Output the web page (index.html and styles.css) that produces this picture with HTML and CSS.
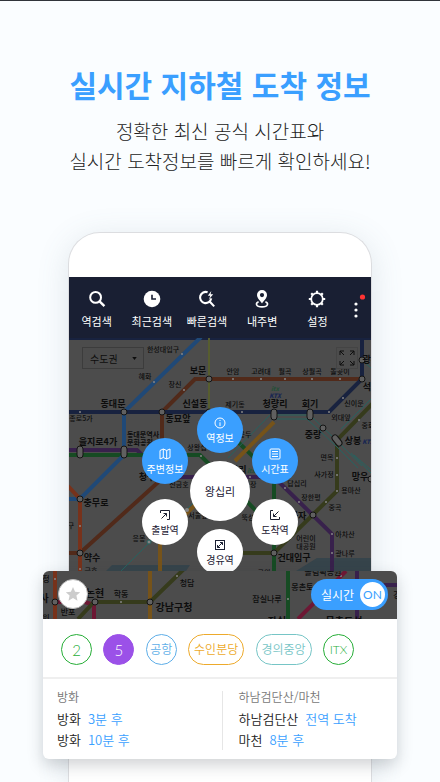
FILE: index.html
```
<!DOCTYPE html>
<html lang="ko">
<head>
<meta charset="utf-8">
<meta name="viewport" content="width=device-width, initial-scale=1">
<title>실시간 지하철 도착 정보</title>
<link rel="stylesheet" href="styles.css">
</head>
<body>
<header class="intro">
  <h1>실시간 지하철 도착 정보</h1>
  <p>정확한 최신 공식 시간표와<br>실시간 도착정보를 빠르게 확인하세요!</p>
</header>

<main class="phone">
  <nav class="toolbar">
    <button class="tool" type="button">
      <svg viewBox="0 0 18 18"><circle cx="7.6" cy="7.4" r="5.4"/><path d="M11.6 11.4 16.4 16.2" stroke-width="2.4"/></svg>
      <span>역검색</span>
    </button>
    <button class="tool" type="button">
      <svg viewBox="0 0 18 18"><circle cx="9" cy="9" r="8.3" fill="#fff" stroke="none"/><path d="M9 4.8V9h4" stroke="#191f33" stroke-width="1.6"/></svg>
      <span>최근검색</span>
    </button>
    <button class="tool" type="button">
      <svg viewBox="0 0 18 18"><path d="M9.6 2.2A5.6 5.6 0 1 0 13.2 8.4M12.1 12 16.2 16.4" stroke-width="2.1"/><path d="M13.3 1 9.8 5.7h2.5L10.8 9.4l4.4-5.1h-2.6z" fill="#fff" stroke="none"/></svg>
      <span>빠른검색</span>
    </button>
    <button class="tool" type="button">
      <svg viewBox="0 0 18 18"><path fill="#fff" stroke="none" fill-rule="evenodd" d="M9 0a5 5 0 0 0-5 5c0 3.2 3.4 6 5 8.4C10.6 11 14 8.2 14 5a5 5 0 0 0-5-5zm0 3a2.1 2.1 0 1 1 0 4.2A2.1 2.1 0 0 1 9 3z"/><path d="M5.6 11.7C2.2 13 2.6 16.800 9 16.800s6.800-3.800 3.400-5.100" stroke-width="1.7"/></svg>
      <span>내주변</span>
    </button>
    <button class="tool" type="button">
      <svg viewBox="0 0 18 18"><circle cx="9" cy="9" r="5.8" stroke-width="1.8"/><path d="M9 .8v2.4M9 14.8v2.4M.8 9h2.4M14.8 9h2.4M3.2 3.2l1.7 1.7M13.1 13.1l1.7 1.7M3.2 14.8l1.7-1.7M13.1 4.900l1.7-1.7" stroke-width="2.2"/></svg>
      <span>설정</span>
    </button>
    <button class="more" type="button" aria-label="더보기">
      <svg viewBox="0 0 20 30"><g fill="#fff"><circle cx="7" cy="11" r="1.600"/><circle cx="7" cy="17" r="1.600"/><circle cx="7" cy="23" r="1.600"/></g><circle cx="13.500" cy="4" r="2.600" fill="#ff3333"/></svg>
    </button>
  </nav>

  <section class="map">
    <svg class="lines" viewBox="69 338 302 233" preserveAspectRatio="xMidYMid slice">
      <path class="river" d="M106 571 112 565H190L186 571ZM296 571 317 558H371V571Z"/>
      <g class="track">
        <path class="navy" d="M69 338H371"/>
        <path class="lime" d="M209 338V412"/>
        <path class="brown" d="M162 412V445M162 412 195 379H362M165 476 80 553H69"/>
        <path class="purple" d="M69 450H137L165 477H267L280 483 332 534V571"/>
        <path class="green" d="M69 455H200L216 471M236 440 274 477V571M240 494 274 530"/>
        <path class="blue" d="M201 337 124 412V455L80 499H69"/>
        <path class="red" d="M68 486 80 499V571"/>
        <path class="orange" d="M274 422 235 461M198 502 160 540V571"/>
        <path class="olive" d="M374 402 337 440V491L274 553H243"/>
        <path class="navy" d="M69 412H329L362 379V338"/>
      </g>
      <g class="thin">
        <path d="M270 415 228 458M274 415H310L337 441 362 466M277 419H307L335 445 358 468M341 429 371 399M351 453 371 473M354 455 371 470M362 360 371 368M200 497 150 542 121 571"/>
      </g>
      <g class="hub">
        <circle cx="124" cy="412" r="3"/><circle cx="162" cy="412" r="3"/><circle cx="209" cy="379" r="3"/><circle cx="209" cy="412" r="3"/>
        <circle cx="362" cy="360" r="3"/><circle cx="362" cy="379" r="3"/><circle cx="80" cy="499" r="3"/><circle cx="80" cy="553" r="3"/>
        <circle cx="274" cy="553" r="3"/><circle cx="313" cy="515" r="3"/><circle cx="323" cy="428" r="3"/><circle cx="371" cy="479" r="3"/>
        <rect x="77" y="446" width="6" height="12" rx="3"/><rect x="121" y="446" width="6" height="12" rx="3"/>
        <rect x="271" y="409" width="6" height="11" rx="3"/><rect x="307" y="409" width="6" height="11" rx="3"/>
        <path d="M335 438 339 443" stroke="#141414" stroke-width="7" stroke-linecap="round"/><path d="M335 438 339 443" stroke="#606060" stroke-width="5" stroke-linecap="round"/>
      </g>
      <g class="stop">
        <circle cx="182" cy="354" r="1"/><circle cx="154" cy="382" r="1"/><circle cx="184" cy="390" r="1"/><circle cx="80" cy="412" r="1"/><circle cx="233" cy="379" r="1"/><circle cx="261" cy="379" r="1"/><circle cx="285" cy="379" r="1"/><circle cx="312" cy="379" r="1"/><circle cx="340" cy="379" r="1"/><circle cx="242" cy="412" r="1"/><circle cx="329" cy="412" r="1"/><circle cx="343" cy="398" r="1"/><circle cx="201" cy="456" r="1"/><circle cx="80" cy="526" r="1"/><circle cx="80" cy="569" r="1"/><circle cx="250" cy="477" r="1"/><circle cx="285" cy="488" r="1"/><circle cx="299" cy="502" r="1"/><circle cx="337" cy="458" r="1"/><circle cx="337" cy="475" r="1"/><circle cx="337" cy="491" r="1"/><circle cx="326" cy="502" r="1"/><circle cx="332" cy="534" r="1"/><circle cx="332" cy="553" r="1"/><circle cx="359" cy="420" r="1"/><circle cx="149" cy="542" r="2" stroke="#27625f"/><circle cx="187" cy="510" r="2"/>
      </g>
      <g class="minor">
        <text x="163" y="352">한성대입구</text><text x="145" y="379">혜화</text><text x="175" y="387">창신</text><text x="81" y="421">종로5가</text>
        <text x="197" y="450">상왕십</text><text x="233" y="374">안암</text><text x="261" y="374">고려대</text><text x="285" y="374">월곡</text><text x="312" y="374">상월곡</text><text x="340" y="374">돌곶이</text>
        <text x="235" y="407">제기동</text><text x="354" y="406">신이문</text><text x="341" y="420">외대앞</text><text x="245" y="437">용두</text><text x="327" y="460">면목</text><text x="324" y="477">사가정</text>
        <text x="351" y="493">용마산</text><text x="335" y="510">중곡</text><text x="297" y="486">답십리</text><text x="311" y="500">장한평</text><text x="345" y="537">아차산</text><text x="345" y="556">광나루</text>
        <text x="306" y="541">어린이</text><text x="306" y="549">대공원</text><text x="264" y="575">구의</text><text x="91" y="573">금호</text><text x="139" y="541">응봉</text><text x="179" y="487">신금호</text>
        <text x="198" y="518">서울숲</text><text x="248" y="520">뚝섬</text><text x="250" y="487">마장</text><text x="71" y="528">구</text><text x="368" y="428">중화</text>
        <text class="strong" x="143" y="437">동대문역사</text><text class="strong" x="140" y="445">문화공원</text>
      </g>
      <g class="major">
        <text x="198" y="374">보문</text><text x="113" y="407">동대문</text><text x="195" y="407">신설동</text><text x="178" y="422">동묘앞</text><text x="98" y="445">을지로4가</text>
        <text x="275" y="407">청량리</text><text x="310" y="407">회기</text><text x="313" y="438">중랑</text><text x="353" y="444">상봉</text><text x="360" y="480">망우</text><text x="298" y="519">군자</text>
        <text x="294" y="561">건대입구</text><text x="96" y="506">충무로</text><text x="92" y="561">약수</text><text x="147" y="480">청구</text><text x="371" y="390">석계</text><text x="375" y="363">광운대</text><text x="234" y="473">왕십리</text>
      </g>
      <g class="rail"><text x="275" y="391" fill="#264f38">itx</text><text x="275" y="398" fill="#182652">KTX</text><text x="368" y="444" fill="#182652">KTX</text><text x="251" y="473" fill="#264f38">itx</text></g>
    </svg>

    <select class="region" aria-label="지역"><option>수도권</option></select>
    <svg class="caret" viewBox="0 0 6 4" aria-hidden="true"><path d="M0 0H6L3 4Z"/></svg>
    <button class="expand" type="button" aria-label="전체 화면">
      <svg viewBox="0 0 20 20"><path d="M7 3H3V7M3 3 7 7M13 3h4v4M17 3l-4 4M3 13v4h4M3 17l4-4M17 13v4h-4M17 17l-4-4"/></svg>
    </button>

    <div class="wheel">
      <button class="spot blue-spot top" type="button"><svg viewBox="0 0 14 14"><circle cx="7" cy="7" r="5"/><path d="M7 6.300V10M7 4v1"/></svg><span>역정보</span></button>
      <button class="spot blue-spot upper-left" type="button"><svg viewBox="0 0 14 14"><path d="M2 3.500 5.300 2 8.700 3.500 12 2v8.500L8.700 12 5.300 10.500 2 12ZM5.300 2v8.500M8.700 3.500V12"/></svg><span>주변정보</span></button>
      <button class="spot blue-spot upper-right" type="button"><svg viewBox="0 0 14 14"><rect x="2" y="2" width="10" height="10" rx="1"/><path d="M4 4.500h6M4 7h6M4 9.500h6"/></svg><span>시간표</span></button>
      <button class="spot lower-left" type="button"><svg viewBox="0 0 14 14"><path d="M2.500 5V2.500H11.500V11.500H9M3.500 10.500 8.500 5.500M5.500 5.500h3v3"/></svg><span>출발역</span></button>
      <button class="spot lower-right" type="button"><svg viewBox="0 0 14 14"><path d="M5 2.500H2.500V11.500H11.500V9M10.500 3.500 5.500 8.500M5.500 5.500v3h3"/></svg><span>도착역</span></button>
      <button class="spot bottom" type="button"><svg viewBox="0 0 14 14"><rect x="2.500" y="2.500" width="9" height="9"/><path d="M4.500 9.500 9.500 4.500M7 4.500h2.500V7M4.500 7v2.500H7"/></svg><span>경유역</span></button>
      <button class="spot center" type="button"><span>왕십리</span></button>
    </div>
  </section>

  <section class="card">
    <div class="card-top">
      <svg class="lines" viewBox="43 571 354 48" preserveAspectRatio="xMidYMid slice">
        <g class="track">
          <path class="red" d="M55 571V619"/><path class="pink" d="M55 602H85L94 605V619M298 619 346 571"/>
          <path class="orange" d="M150 571V619"/><path class="olive" d="M78 619 94 602H150L184 569"/>
          <path class="green" d="M288 571V619"/><path class="purple" d="M357 571V619M357 585H397"/>
        </g>
        <g class="hub"><circle cx="55" cy="602" r="3"/><circle cx="95" cy="602" r="3"/><circle cx="150" cy="602" r="3"/></g>
        <g class="stop"><circle cx="55" cy="579" r="1"/><circle cx="121" cy="602" r="1"/><circle cx="177" cy="576" r="1"/><circle cx="288" cy="599" r="1"/><circle cx="341" cy="576" r="1"/></g>
        <g class="minor wide"><text x="46" y="582">정</text><text x="46" y="621">원</text><text x="121" y="597">학동</text><text x="68" y="615">반포</text><text x="187" y="586">청담</text><text x="267" y="602">잠실나루</text><text x="306" y="590">몽촌토성</text><text x="323" y="575">올림픽공원</text><text x="397" y="598">강</text></g>
        <g class="major wide"><text x="44" y="602">사</text><text x="95" y="597">논현</text><text x="174" y="611">강남구청</text><text x="277" y="625">잠실</text><text x="344" y="625">몽촌토성</text></g>
      </svg>
      <button class="star" type="button" aria-label="즐겨찾기"><svg viewBox="0 0 16 16"><path d="M8 1 10.100 5.700 15.200 6.200 11.400 9.600 12.500 14.700 8 12.100 3.500 14.700 4.600 9.600.8 6.200 5.900 5.700Z"/></svg></button>
      <button class="live" type="button" role="switch" aria-checked="true"><span>실시간</span><span class="knob">ON</span></button>
    </div>
    <div class="routes">
      <button class="route line2" type="button">2</button>
      <button class="route line5" type="button">5</button>
      <button class="route airport" type="button">공항</button>
      <button class="route wide-route suin" type="button">수인분당</button>
      <button class="route wide-route gyeongui" type="button">경의중앙</button>
      <button class="route itx" type="button">ITX</button>
    </div>
    <div class="arrivals">
      <section>
        <h2>방화</h2>
        <p>방화<b>3분 후</b></p>
        <p>방화<b>10분 후</b></p>
      </section>
      <section>
        <h2>하남검단산/마천</h2>
        <p>하남검단산<b>전역 도착</b></p>
        <p>마천<b>8분 후</b></p>
      </section>
    </div>
  </section>
</main>
</body>
</html>
```
FILE: styles.css
```
* { box-sizing: border-box; }

body {
  margin: 0;
  min-height: 100vh;
  display: flex;
  flex-direction: column;
  border-top: 1px solid #30343a;
  background: #fafdff;
  color: #222;
  font-family: "Noto Sans CJK KR", sans-serif;
}

button, select {
  margin: 0;
  padding: 0;
  border: 0;
  background: none;
  color: inherit;
  font: inherit;
}

svg { display: block; fill: none; }

.intro { padding: 63px 0 56px; text-align: center; }
.intro h1 { margin: 0; color: #3a9fff; font-size: 30px; line-height: 40px; font-weight: 700; }
.intro p { margin: 12px 0 0; font-size: 19px; line-height: 30px; font-weight: 300; }

.phone {
  flex: 1;
  margin: 0 68px;
  padding-top: 44px;
  border: 1px solid #dcdde0;
  border-bottom: 0;
  border-radius: 32px 32px 0 0;
  background: #fff;
  box-shadow: 0 6px 32px rgba(90, 110, 130, 0.16);
}

.toolbar {
  display: grid;
  grid-template-columns: repeat(5, 1fr) 26px;
  height: 61px;
  background: #191f33;
  color: #fff;
}
.tool {
  display: flex;
  flex-direction: column;
  align-items: center;
  padding-top: 13px;
  gap: 5px;
  font-size: 11px;
  line-height: 16px;
  white-space: nowrap;
}
.tool svg { width: 18px; height: 18px; stroke: #fff; stroke-width: 2; }
.more svg { width: 20px; height: 30px; margin-left: 4px; }

.map { position: relative; height: 233px; overflow: hidden; background: #4c4c4c; }
.lines { width: 100%; height: 100%; }
.track { stroke-width: 4; }
.river { fill: #36444b; }
.navy { stroke: #18223f; }
.lime { stroke: #575d2f; stroke-width: 2; }
.brown { stroke: #512a1a; }
.purple { stroke: #38214c; }
.green { stroke: #164b23; }
.blue { stroke: #204977; }
.red { stroke: #77321b; }
.pink { stroke: #6d1834; }
.orange { stroke: #76531a; }
.olive { stroke: #363b1c; }
.thin { stroke: #27625f; stroke-width: 1; }
.hub { fill: #606060; stroke: #141414; stroke-width: 1; }
.stop { fill: #858585; }
.minor, .major, .rail { fill: #0d0d0d; text-anchor: middle; }
.minor { font-size: 7px; font-weight: 500; }
.minor .strong { font-weight: 700; }
.major { font-size: 9px; font-weight: 700; }
.minor.wide { font-size: 8px; }
.major.wide { font-size: 10px; }
.rail { font-size: 6px; font-style: italic; font-weight: 900; }

.region {
  position: absolute;
  top: 9px;
  left: 13px;
  width: 62px;
  height: 22px;
  padding-left: 7px;
  border: 1px solid #3c3c3c;
  appearance: none;
  background: #4c4c4c;
  color: #0d0d0d;
  font-size: 10px;
}
.caret { position: absolute; top: 19px; left: 63px; width: 5px; height: 3px; fill: #0d0d0d; }
.expand { position: absolute; top: 9px; right: 13px; width: 22px; height: 22px; border: 1px solid #444; background: #4c4c4c; }
.expand svg { width: 20px; height: 20px; stroke: #0d0d0d; }

.wheel { position: absolute; top: 153px; left: 50%; }
.spot {
  position: absolute;
  display: flex;
  flex-direction: column;
  align-items: center;
  justify-content: center;
  gap: 1px;
  width: 46px;
  height: 46px;
  margin: -23px;
  border-radius: 50%;
  background: #fff;
  color: #1b2033;
  font-size: 10px;
  line-height: 14px;
  white-space: nowrap;
}
.spot svg { width: 14px; height: 14px; stroke: currentColor; }
.blue-spot { background: #3a9fff; color: #fff; }
.top { top: -61px; left: 0; }
.upper-left { top: -30px; left: -55px; }
.upper-right { top: -30px; left: 55px; }
.lower-left { top: 31px; left: -55px; }
.lower-right { top: 31px; left: 55px; }
.bottom { top: 61px; left: 0; }
.center { width: 60px; height: 60px; margin: -30px; font-size: 11px; }

.card {
  position: relative;
  margin: 0 -26px;
  border-radius: 6px;
  background: #fff;
  box-shadow: 0 6px 16px rgba(40, 50, 60, 0.22);
}
.card-top {
  position: relative;
  height: 48px;
  overflow: hidden;
  border-radius: 6px 6px 0 0;
  background: #4c4c4c;
}
.star {
  position: absolute;
  top: 8px;
  left: 15px;
  display: grid;
  place-items: center;
  width: 30px;
  height: 30px;
  border: 1px solid #bbb;
  border-radius: 50%;
  background: #fff;
}
.star svg { width: 16px; height: 16px; fill: #ccc; }
.live {
  position: absolute;
  top: 8px;
  right: 9px;
  display: flex;
  align-items: center;
  justify-content: space-between;
  width: 77px;
  height: 31px;
  padding: 0 3px 0 10px;
  border-radius: 16px;
  background: #3a9fff;
  color: #fff;
  font-size: 12px;
}
.knob {
  width: 25px;
  border-radius: 50%;
  background: #fff;
  color: #3a9fff;
  font-family: Lato, sans-serif;
  line-height: 25px;
  text-align: center;
}

.routes {
  display: flex;
  justify-content: space-between;
  padding: 15px 43px 12px 18px;
  border-bottom: 2px solid #efefef;
}
.route {
  width: 31px;
  height: 31px;
  border: 1px solid;
  border-radius: 16px;
  font-family: Lato, "Noto Sans CJK KR", sans-serif;
  font-size: 12px;
  line-height: 28px;
  font-weight: 350;
  white-space: nowrap;
}
.wide-route { width: 56px; }
.line2 { color: #27ae38; font-size: 15px; }
.line5 { border-color: #9b51e8; background: #9b51e8; color: #fff; font-size: 15px; }
.airport { color: #5eaee8; }
.suin { color: #edaa2b; }
.gyeongui { color: #76c5c6; }
.itx { color: #27ae38; }

.arrivals { display: grid; grid-template-columns: 1fr 1fr; padding: 12px 11px 9px 14px; font-weight: 350; }
.arrivals section + section { padding-left: 16px; border-left: 1px solid #e6e6e6; }
.arrivals h2 { margin: 0 0 5px; color: #777; font-size: 12px; line-height: 12px; font-weight: 350; }
.arrivals p { margin: 0; font-size: 13px; line-height: 21px; white-space: nowrap; }
.arrivals b { margin-left: 7px; color: #3a9fff; font-weight: 350; }
```
